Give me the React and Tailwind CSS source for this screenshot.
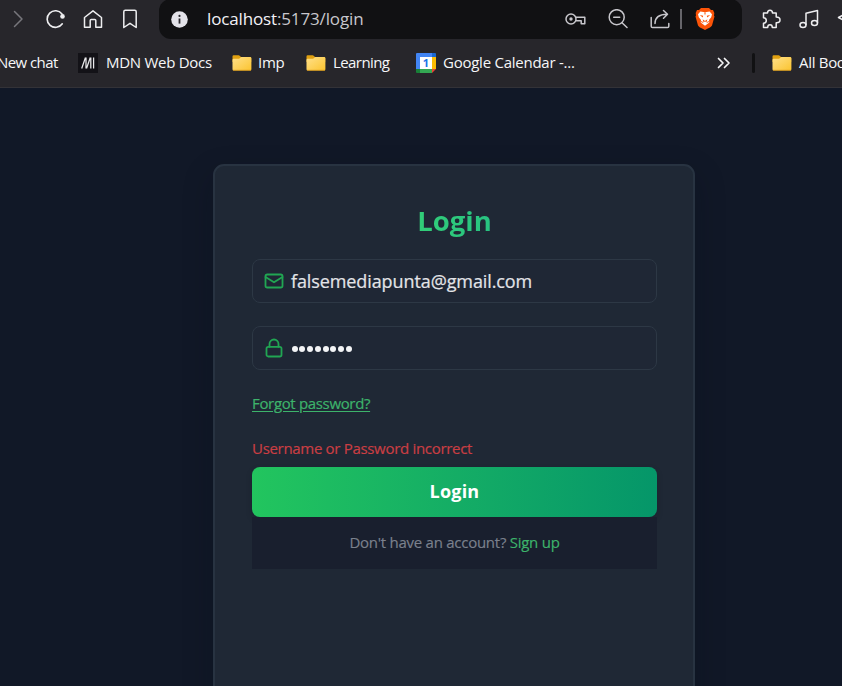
import React from "react";

const stroke = {
  fill: "none",
  stroke: "currentColor",
  strokeWidth: 1.5,
  strokeLinecap: "round",
  strokeLinejoin: "round",
};

function Icon({ children, className = "", size = 20, ...rest }) {
  return (
    <svg width={size} height={size} viewBox="0 0 20 20" className={"shrink-0 " + className} {...stroke} {...rest}>
      {children}
    </svg>
  );
}

function Folder() {
  return (
    <svg width="20" height="20" viewBox="0 0 20 20" className="shrink-0">
      <defs>
        <linearGradient id="folder" x1="0" y1="0" x2="1" y2="1">
          <stop offset="0" stopColor="#ffe08a" />
          <stop offset="1" stopColor="#fbc42f" />
        </linearGradient>
      </defs>
      <path d="M.5 3.4Q.5 2.2 1.7 2.2H6.600Q7.200 2.200 7.700 2.700L9 4H18Q19.200 4 19.200 5.200V9H.5Z" fill="#e0a010" />
      <path d="M.5 7Q.5 5.800 1.700 5.800H6.500Q7.200 5.800 7.700 5.300L8.500 4.500Q9 4 9.600 4H18Q19.400 4 19.400 5.200V16.300Q19.400 17.600 18.100 17.600H1.800Q.5 17.600 .5 16.300Z" fill="url(#folder)" />
      <path d="M1 17.300H19" stroke="#d99b1c" strokeWidth=".8" />
    </svg>
  );
}

function CalendarLogo() {
  return (
    <svg width="20" height="20" viewBox="0 0 20 20" className="shrink-0">
      <path d="M1 0H16V4H4V16H0V1Q0 0 1 0Z" fill="#4285f4" />
      <path d="M16 0H19Q20 0 20 1V4H16Z" fill="#1967d2" />
      <path d="M16 4H20V16H16Z" fill="#fbbc04" />
      <path d="M4 16H16V20H4Z" fill="#34a853" />
      <path d="M0 16H4V20H1Q0 20 0 19Z" fill="#188038" />
      <path d="M16 16H20L16 20Z" fill="#ea4335" />
      <path d="M4 4H16V16H4Z" fill="#fff" />
      <text x="10" y="14" textAnchor="middle" fontSize="11" fontWeight="700" fill="#1a73e8" fontFamily="Open Sans, sans-serif">1</text>
    </svg>
  );
}

function MdnLogo() {
  return (
    <svg width="20" height="20" viewBox="0 0 20 20" className="shrink-0">
      <path d="M0 0H20V20H0Z" fill="#131217" />
      <path d="M3.700 15.500 7.500 4.500M8 4.500V15.500M8.500 15.500 12.300 4.500M12.800 4.500V15.500M15.600 4.500V15.500" fill="none" stroke="#e8e8ea" strokeWidth="1.250" />
    </svg>
  );
}

function BraveLogo() {
  return (
    <svg width="20" height="24" viewBox="0 0 20 24" className="shrink-0">
      <path d="M6 1H14L16 3L18 3L19.300 6L19 8.500L19.500 9.500L17 18.500Q16.500 20 10 23Q3.500 20 3 18.500L.5 9.500L1 8.500L.7 6L2 3H4Z" fill="#fb5408" />
      <path d="M5.400 4.500 10 5.300 14.600 4.500 17 7.300 16.200 10.200 14 13 14.300 15.500 10 18.800 5.700 15.500 6 13 3.800 10.200 3 7.300Z" fill="#fff" />
      <path d="M4.800 8 8.200 8.800 7.700 10.500ZM15.200 8 11.800 8.800 12.300 10.500ZM7.600 12.300 10 14 12.400 12.300 11.500 15 10 14.500 8.500 15ZM9.200 5.500 10 8.500 10.800 5.500Z" fill="#fb5408" />
      <path d="M6 14.500 8.300 15.600M14 14.500 11.700 15.600" stroke="#fb5408" strokeWidth=".9" />
    </svg>
  );
}

function Toolbar() {
  return (
    <div className="-mt-px flex h-[40px] items-center">
      <div className="grid w-[149px] shrink-0 grid-cols-4 place-items-center text-[#eeeef0]">
        <Icon className="text-[#77767c]"><path d="M5.500 2.500 13 10 5.500 17.500" /></Icon>
        <Icon>
          <path d="M16.300 14.800A8.300 8.300 0 1 1 16 5" strokeWidth="1.600" />
          <circle cx="16.500" cy="7.400" r="2.300" fill="currentColor" stroke="none" />
        </Icon>
        <Icon><path d="M1.500 8.500 10 1.800 18.500 8.500V18.200H12.800V11.500Q12.800 10.500 11.800 10.500H8.200Q7.200 10.500 7.200 11.500V18.200H1.500Z" /></Icon>
        <Icon><path d="M3.800 2.800Q3.800 1.300 5.300 1.300H14.700Q16.200 1.300 16.200 2.800V18.500L10 14.300 3.800 18.500Z" /></Icon>
      </div>

      <div className="ml-[10px] flex h-full w-[583px] shrink-0 items-center rounded-[12px] bg-[#111113] pl-[12px] text-[#c8c7cc]">
        <svg width="17" height="17" viewBox="0 0 17 17" className="shrink-0">
          <circle cx="8.500" cy="8.500" r="8.300" fill="#e4e3e9" />
          <path d="M8.500 7.500V12.600" stroke="#29282d" strokeWidth="1.800" />
          <circle cx="8.500" cy="4.900" r="1.100" fill="#29282d" />
        </svg>
        <div className="ml-[19px] w-[358px] whitespace-nowrap text-[17px] leading-5 tracking-[-0.140px] text-[#c8c7cc]">
          <span className="text-[#f3f2f7]">localhost</span>:5173/login
        </div>
        <svg width="21" height="14" viewBox="0 0 21 14" className="shrink-0" {...stroke}>
          <circle cx="6" cy="7" r="5" />
          <circle cx="6" cy="7" r="1.700" fill="currentColor" stroke="none" />
          <path d="M10.800 5.300H19.800V11.800H16.200V8.800H10.800" />
        </svg>
        <Icon className="ml-[22px]">
          <circle cx="8.700" cy="8.200" r="7.500" />
          <path d="M5.700 8.200H11.700M14 13.800 19 18.500" />
        </Icon>
        <Icon className="ml-[22px]">
          <path d="M1.200 8.500V17.200Q1.200 18.500 2.500 18.500H17.500Q18.800 18.500 18.800 17.200V14.500M5 14.500Q5 5.500 17 5.300M13.500 1.500 17.500 5.300 13.500 9.200" />
        </Icon>
        <div className="ml-[10px] h-5 w-[2px] bg-[#66656a]" />
        <div className="ml-[13px]"><BraveLogo /></div>
      </div>

      <div className="ml-[19px] flex shrink-0 items-center gap-[18px] text-[#eeeef0]">
        <Icon>
          <path d="M2.500 4H6.500Q6.500 1.200 9 1.200T11.500 4H15.200V8Q19 8 19 11T15.200 13.800V18.500H11.300Q11.300 15.800 9 15.800T6.700 18.500H2.500V14.200Q5.300 14 5.300 11.500T2.500 8.800Z" />
        </Icon>
        <Icon>
          <path d="M7 15.500V4.300L18.500 1.500V13.500" />
          <ellipse cx="4" cy="16" rx="3" ry="2.500" />
          <ellipse cx="15.500" cy="14" rx="3" ry="2.500" />
        </Icon>
        <Icon><path d="M8 5 1.500 8.500 8 12" /></Icon>
      </div>
    </div>
  );
}

function Label({ children, className = "tracking-[-0.300px]" }) {
  return <span className={"pb-[2px] " + className}>{children}</span>;
}

function Bookmarks() {
  return (
    <div className="flex h-[48px] items-center whitespace-nowrap text-[15px] leading-5 text-[#f6f6f8]">
      <Label className="ml-[-3px] w-[61px] shrink-0 tracking-[-0.580px]">New chat</Label>
      <div className="ml-[20px] flex w-[134px] shrink-0 items-center gap-2">
        <MdnLogo /><Label className="tracking-[-0.270px]">MDN Web Docs</Label>
      </div>
      <div className="ml-[20px] flex w-[54px] shrink-0 items-center gap-[6px]">
        <Folder /><Label>Imp</Label>
      </div>
      <div className="ml-[20px] flex w-[84px] shrink-0 items-center gap-[7px]">
        <Folder /><Label className="tracking-[-0.580px]">Learning</Label>
      </div>
      <div className="ml-[26px] flex w-[160px] shrink-0 items-center gap-[7px]">
        <CalendarLogo /><Label className="tracking-[-0.250px]">Google Calendar -...</Label>
      </div>
      <svg width="14" height="12" viewBox="0 0 14 12" className="ml-[141px] shrink-0" {...stroke} strokeWidth="1.700">
        <path d="M1.500 1.500 6 6 1.500 10.500M7.500 1.500 12 6 7.500 10.500" />
      </svg>
      <div className="ml-[21px] h-5 w-[3px] shrink-0 rounded-full bg-[#111113]" />
      <div className="ml-[17px] flex shrink-0 items-center gap-[7px]">
        <Folder /><Label>All Bookmarks</Label>
      </div>
    </div>
  );
}

function LoginCard() {
  return (
    <section className="flex h-[620px] w-[482px] flex-col rounded-[11px] border-2 border-[#283341] bg-[#1f2835] pl-[37px] pr-[36px] pt-[35px] shadow-[0_12px_30px_#080c1640]">
      <h1 className="h-[40px] text-center text-[27.500px] font-bold leading-[40px]">
        <span className="bg-gradient-to-r from-[#32ce78] to-[#27c281] bg-clip-text text-transparent">Login</span>
      </h1>

      <div className="mt-[18px] flex h-[44px] items-center rounded-[8px] border border-[#2d3845] bg-[#1f2735] pl-[11px]">
        <svg width="20" height="16" viewBox="0 0 20 16" className="ml-[-0.500px] shrink-0 text-[#21a653]" {...stroke} strokeWidth="1.800">
          <rect x="1.500" y="1.500" width="17" height="13" rx="1.800" />
          <path d="M1.500 4 10 9.300 18.500 4" />
        </svg>
        <span className="ml-[7.500px] pb-px text-[18px] leading-6 tracking-[-0.100px] text-[#e3e4e8] [-webkit-text-stroke:0.200px]">falsemediapunta@gmail.com</span>
      </div>

      <div className="mt-[23px] flex h-[44px] items-center rounded-[8px] border border-[#2d3845] bg-[#1f2735] pl-[11px]">
        <svg width="20" height="20" viewBox="0 0 20 20" className="mb-px ml-[-0.500px] shrink-0 text-[#21a653]" {...stroke} strokeWidth="1.800">
          <rect x="2.500" y="8.800" width="15" height="9.700" rx="1.800" />
          <path d="M5.500 8.800V6A4.500 4.500 0 0 1 14.500 6V8.800" />
        </svg>
        <div className="ml-[8px] mt-[2px] flex gap-[1.750px]">
          {Array.from({ length: 8 }, (_, i) => (
            <span key={i} className="size-[6px] rounded-full bg-[#f3f4f6]" />
          ))}
        </div>
      </div>

      <a className="mt-[23px] h-5 self-start whitespace-nowrap text-[15px] leading-5 tracking-[-0.340px] text-[#3db36b] underline underline-offset-2 [-webkit-text-stroke:0.200px]">Forgot password?</a>
      <p className="mt-[25px] h-5 whitespace-nowrap text-[15px] leading-5 tracking-[-0.310px] text-[#ca3e43] [-webkit-text-stroke:0.200px]">Username or Password incorrect</p>
      <button className="mt-[9px] h-[50px] shrink-0 rounded-[8px] bg-gradient-to-r from-[#22c55e] to-[#059669] pb-[2px] text-[18px] font-bold leading-6 tracking-[0.200px] text-white shadow-[0_3px_6px_#0b122033]">Login</button>
      <p className="h-[52px] whitespace-nowrap bg-[#191f2e] text-center text-[15px] leading-[50px] tracking-[-0.260px] text-[#7b818d] [-webkit-text-stroke:0.150px]">
        Don't have an account? <a className="text-[#3db36b]">Sign up</a>
      </p>
    </section>
  );
}

export default function App() {
  return (
    <div className="flex h-[686px] w-[842px] flex-col overflow-hidden bg-[#111827] font-['Open_Sans','Noto_Sans',sans-serif]">
      <header className="h-[88px] shrink-0 overflow-hidden border-b border-[#333237] bg-[#27262b]">
        <Toolbar />
        <Bookmarks />
      </header>
      <main className="flex min-h-0 flex-1 items-start overflow-hidden pl-[213px] pt-[76px]">
        <LoginCard />
      </main>
    </div>
  );
}
